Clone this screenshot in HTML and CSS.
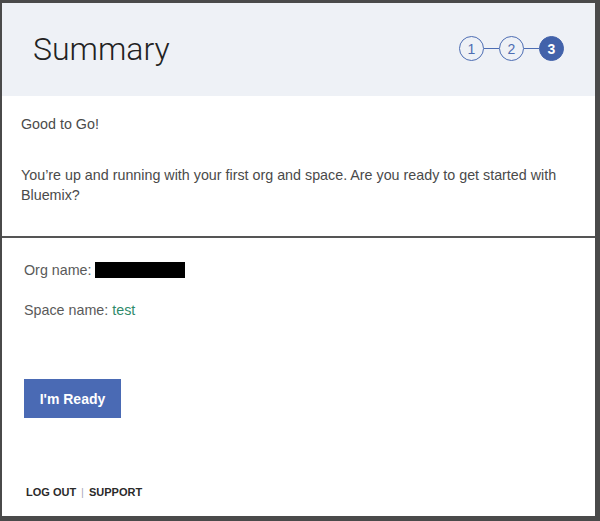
FILE: index.html
```html
<!DOCTYPE html>
<html lang="en">
<head>
    <meta charset="UTF-8">
    <meta name="viewport" content="width=device-width, initial-scale=1.0">
    <title>Summary</title>
    <link rel="stylesheet" href="styles.css">
</head>
<body>
    <div class="dialog">
        <div class="dialog-header">
            <h1 class="dialog-title">Summary</h1>
            <div class="steps">
                <span class="step">1</span>
                <span class="step-line"></span>
                <span class="step">2</span>
                <span class="step-line"></span>
                <span class="step active">3</span>
            </div>
        </div>

        <div class="dialog-intro">
            <p>Good to Go!</p>
            <p>You’re up and running with your first org and space. Are you ready to get started with Bluemix?</p>
        </div>

        <div class="dialog-details">
            <p class="detail">Org name: <span class="redacted"></span></p>
            <p class="detail">Space name: <span class="detail-value">test</span></p>

            <button class="ready-button">I'm Ready</button>

            <div class="footer-links">
                <a href="#" class="footer-link">LOG OUT</a>
                <span class="footer-sep">|</span>
                <a href="#" class="footer-link">SUPPORT</a>
            </div>
        </div>
    </div>
</body>
</html>
```

FILE: styles.css
```css
html, body {
    margin: 0;
    height: 100%;
}

body {
    background-color: #4a4a4a;
    font-family: "Liberation Sans", Arial, sans-serif;
    color: #4a4a4a;
}

.dialog {
    box-sizing: border-box;
    height: calc(100% - 8px);
    margin: 3px 5px 5px 2px;
    background-color: #fff;
    display: flex;
    flex-direction: column;
}

.dialog-header {
    height: 93px;
    background-color: #eef1f6;
    display: flex;
    align-items: center;
    justify-content: space-between;
    padding: 0 31px 0 31px;
}

.dialog-title {
    margin: 0;
    font-family: Roboto, "Liberation Sans", sans-serif;
    font-weight: 300;
    font-size: 32px;
    color: #222;
    padding-bottom: 2px;
}

.steps {
    display: flex;
    align-items: center;
    padding-bottom: 2px;
}

.step {
    box-sizing: border-box;
    width: 25px;
    height: 25px;
    border: 1.5px solid #4d6db3;
    border-radius: 50%;
    display: flex;
    align-items: center;
    justify-content: center;
    font-size: 14px;
    color: #4d6db3;
}

.step.active {
    background-color: #4262aa;
    border-color: #4262aa;
    color: #fff;
    font-weight: bold;
}

.step-line {
    width: 15px;
    height: 1.5px;
    background-color: #4d6db3;
}

.dialog-intro {
    padding: 10px 19px 31px;
    border-bottom: 2px solid #555;
    font-size: 14.3px;
    line-height: 20px;
}

.dialog-intro p {
    margin: 8px 0 0;
}

.dialog-intro p + p {
    margin-top: 31px;
}

.dialog-details {
    flex: 1;
    padding: 22px 22px 0;
    display: flex;
    flex-direction: column;
    align-items: flex-start;
    font-size: 14.3px;
}

.detail {
    margin: 0 0 20px;
    line-height: 20px;
    display: flex;
    align-items: center;
    color: #5a5a5a;
}

.redacted {
    display: inline-block;
    width: 90px;
    height: 16px;
    margin-left: 3px;
    background-color: #000;
}

.detail-value {
    color: #2e8a6a;
    margin-left: 4px;
}

.ready-button {
    margin-top: 39px;
    width: 97px;
    height: 39px;
    border: none;
    background-color: #4a6ab4;
    color: #fff;
    font-family: "Liberation Sans", Arial, sans-serif;
    font-weight: bold;
    font-size: 14px;
    cursor: pointer;
}

.footer-links {
    margin-top: auto;
    margin-bottom: 18px;
    padding-left: 2px;
    font-size: 11px;
    font-weight: bold;
    display: flex;
    gap: 5px;
}

.footer-link {
    color: #2a2a2a;
    text-decoration: none;
}

.footer-sep {
    color: #aab;
    font-weight: normal;
}
```
